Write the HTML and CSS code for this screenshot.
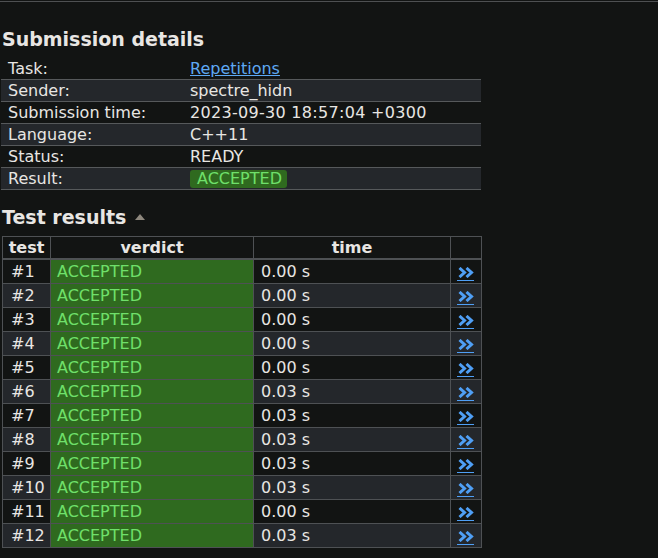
FILE: index.html
```html
<!DOCTYPE html>
<html>
<head>
<meta charset="utf-8">
<link rel="stylesheet" href="styles.css">
</head>
<body>
<div class="topline"></div>
<div class="content">
  <h2 class="title">Submission details</h2>
  <table class="summary">
    <tr><td class="label">Task:</td><td><a href="#" class="link">Repetitions</a></td></tr>
    <tr class="alt"><td class="label">Sender:</td><td>spectre_hidn</td></tr>
    <tr><td class="label">Submission time:</td><td class="wide">2023-09-30 18:57:04 +0300</td></tr>
    <tr class="alt"><td class="label">Language:</td><td>C++11</td></tr>
    <tr><td class="label">Status:</td><td>READY</td></tr>
    <tr class="alt"><td class="label">Result:</td><td><span class="badge">ACCEPTED</span></td></tr>
  </table>
  <h2 class="title title-tests">Test results <span class="tri"></span></h2>
  <table class="tests">
    <thead>
      <tr><th class="c-test">test</th><th class="c-verdict">verdict</th><th class="c-time">time</th><th class="c-more"></th></tr>
    </thead>
    <tbody>
      <tr><td>#1</td><td class="ok">ACCEPTED</td><td>0.00 s</td><td><a href="#" class="more"><svg width="16" height="11" viewBox="0 0 16 11"><path d="M1.5 1 L6.5 5.5 L1.5 10 M8.5 1 L13.5 5.5 L8.5 10" fill="none" stroke="currentColor" stroke-width="3"/></svg></a></td></tr>
      <tr class="alt"><td>#2</td><td class="ok">ACCEPTED</td><td>0.00 s</td><td><a href="#" class="more"><svg width="16" height="11" viewBox="0 0 16 11"><path d="M1.5 1 L6.5 5.5 L1.5 10 M8.5 1 L13.5 5.5 L8.5 10" fill="none" stroke="currentColor" stroke-width="3"/></svg></a></td></tr>
      <tr><td>#3</td><td class="ok">ACCEPTED</td><td>0.00 s</td><td><a href="#" class="more"><svg width="16" height="11" viewBox="0 0 16 11"><path d="M1.5 1 L6.5 5.5 L1.5 10 M8.5 1 L13.5 5.5 L8.5 10" fill="none" stroke="currentColor" stroke-width="3"/></svg></a></td></tr>
      <tr class="alt"><td>#4</td><td class="ok">ACCEPTED</td><td>0.00 s</td><td><a href="#" class="more"><svg width="16" height="11" viewBox="0 0 16 11"><path d="M1.5 1 L6.5 5.5 L1.5 10 M8.5 1 L13.5 5.5 L8.5 10" fill="none" stroke="currentColor" stroke-width="3"/></svg></a></td></tr>
      <tr><td>#5</td><td class="ok">ACCEPTED</td><td>0.00 s</td><td><a href="#" class="more"><svg width="16" height="11" viewBox="0 0 16 11"><path d="M1.5 1 L6.5 5.5 L1.5 10 M8.5 1 L13.5 5.5 L8.5 10" fill="none" stroke="currentColor" stroke-width="3"/></svg></a></td></tr>
      <tr class="alt"><td>#6</td><td class="ok">ACCEPTED</td><td>0.03 s</td><td><a href="#" class="more"><svg width="16" height="11" viewBox="0 0 16 11"><path d="M1.5 1 L6.5 5.5 L1.5 10 M8.5 1 L13.5 5.5 L8.5 10" fill="none" stroke="currentColor" stroke-width="3"/></svg></a></td></tr>
      <tr><td>#7</td><td class="ok">ACCEPTED</td><td>0.03 s</td><td><a href="#" class="more"><svg width="16" height="11" viewBox="0 0 16 11"><path d="M1.5 1 L6.5 5.5 L1.5 10 M8.5 1 L13.5 5.5 L8.5 10" fill="none" stroke="currentColor" stroke-width="3"/></svg></a></td></tr>
      <tr class="alt"><td>#8</td><td class="ok">ACCEPTED</td><td>0.03 s</td><td><a href="#" class="more"><svg width="16" height="11" viewBox="0 0 16 11"><path d="M1.5 1 L6.5 5.5 L1.5 10 M8.5 1 L13.5 5.5 L8.5 10" fill="none" stroke="currentColor" stroke-width="3"/></svg></a></td></tr>
      <tr><td>#9</td><td class="ok">ACCEPTED</td><td>0.03 s</td><td><a href="#" class="more"><svg width="16" height="11" viewBox="0 0 16 11"><path d="M1.5 1 L6.5 5.5 L1.5 10 M8.5 1 L13.5 5.5 L8.5 10" fill="none" stroke="currentColor" stroke-width="3"/></svg></a></td></tr>
      <tr class="alt"><td>#10</td><td class="ok">ACCEPTED</td><td>0.03 s</td><td><a href="#" class="more"><svg width="16" height="11" viewBox="0 0 16 11"><path d="M1.5 1 L6.5 5.5 L1.5 10 M8.5 1 L13.5 5.5 L8.5 10" fill="none" stroke="currentColor" stroke-width="3"/></svg></a></td></tr>
      <tr><td>#11</td><td class="ok">ACCEPTED</td><td>0.00 s</td><td><a href="#" class="more"><svg width="16" height="11" viewBox="0 0 16 11"><path d="M1.5 1 L6.5 5.5 L1.5 10 M8.5 1 L13.5 5.5 L8.5 10" fill="none" stroke="currentColor" stroke-width="3"/></svg></a></td></tr>
      <tr class="alt"><td>#12</td><td class="ok">ACCEPTED</td><td>0.03 s</td><td><a href="#" class="more"><svg width="16" height="11" viewBox="0 0 16 11"><path d="M1.5 1 L6.5 5.5 L1.5 10 M8.5 1 L13.5 5.5 L8.5 10" fill="none" stroke="currentColor" stroke-width="3"/></svg></a></td></tr>
    </tbody>
  </table>
</div>
</body>
</html>
```
FILE: styles.css
```css
html, body {
  margin: 0;
  padding: 0;
  background: #121413;
  color: #e8e6e3;
  font-family: "DejaVu Sans", Verdana, sans-serif;
  font-size: 16px;
}
.topline {
  margin-top: 1px;
  height: 1px;
  background: #4e5052;
}
.content {
  padding-left: 1px;
}
.title {
  margin: 0;
  font-size: 19px;
  font-weight: bold;
  line-height: 23px;
  padding: 26px 0 0 1px;
  height: 30px;
}
.title-tests {
  padding-top: 16px;
  height: 30px;
}
.tri {
  display: inline-block;
  width: 0;
  height: 0;
  border-left: 5.5px solid transparent;
  border-right: 5.5px solid transparent;
  border-bottom: 6px solid #8e887e;
  vertical-align: 4px;
  margin-left: 2px;
}
.summary {
  border-collapse: collapse;
  width: 480px;
}
.summary td {
  height: 21px;
  padding: 0;
  line-height: 21px;
  border-bottom: 1px solid #56595b;
  vertical-align: middle;
}
.summary td.label {
  width: 182px;
  padding-left: 7px;
}
.summary td.wide {
  letter-spacing: 0.3px;
}
.summary tr.alt td {
  background: #24272b;
}
.link {
  color: #5ea9f4;
  text-decoration: underline;
}
.badge {
  display: inline-block;
  background: #2f6a1f;
  color: #6fe06a;
  border-radius: 3px;
  padding: 0 5px 0 7px;
  line-height: 18px;
  height: 18px;
  vertical-align: 0;
}
.tests {
  border-collapse: collapse;
  width: 480px;
  margin-left: 1px;
  border: 1px solid #4e5154;
}
.tests th {
  height: 21px;
  padding: 0;
  font-weight: bold;
  text-align: center;
  line-height: 21px;
  border: 1px solid #4e5154;
  border-bottom: 2px solid #4e5154;
}
.tests th.c-test { width: 47px; }
.tests th.c-verdict { width: 202px; }
.tests th.c-time { width: 196px; }
.tests td {
  height: 23px;
  padding: 0 0 0 7px;
  line-height: 23px;
  border: 1px solid #4e5154;
  vertical-align: middle;
}
.tests td:first-child {
  padding-left: 8px;
}
.tests td.ok {
  background: #2f6a1f;
  color: #6fe06a;
  padding-left: 6px;
}
.tests tr.alt td {
  background: #24272b;
}
.tests tr.alt td.ok {
  background: #2f6a1f;
}
.tests td:last-child {
  padding-left: 6px;
}
.more {
  display: inline-flex;
  color: #4f9ff5;
  border-bottom: 1.5px solid #4f9ff5;
  padding: 1px 0 2px 1px;
  vertical-align: -1px;
  text-decoration: none;
}
.more svg {
  display: block;
}
```
